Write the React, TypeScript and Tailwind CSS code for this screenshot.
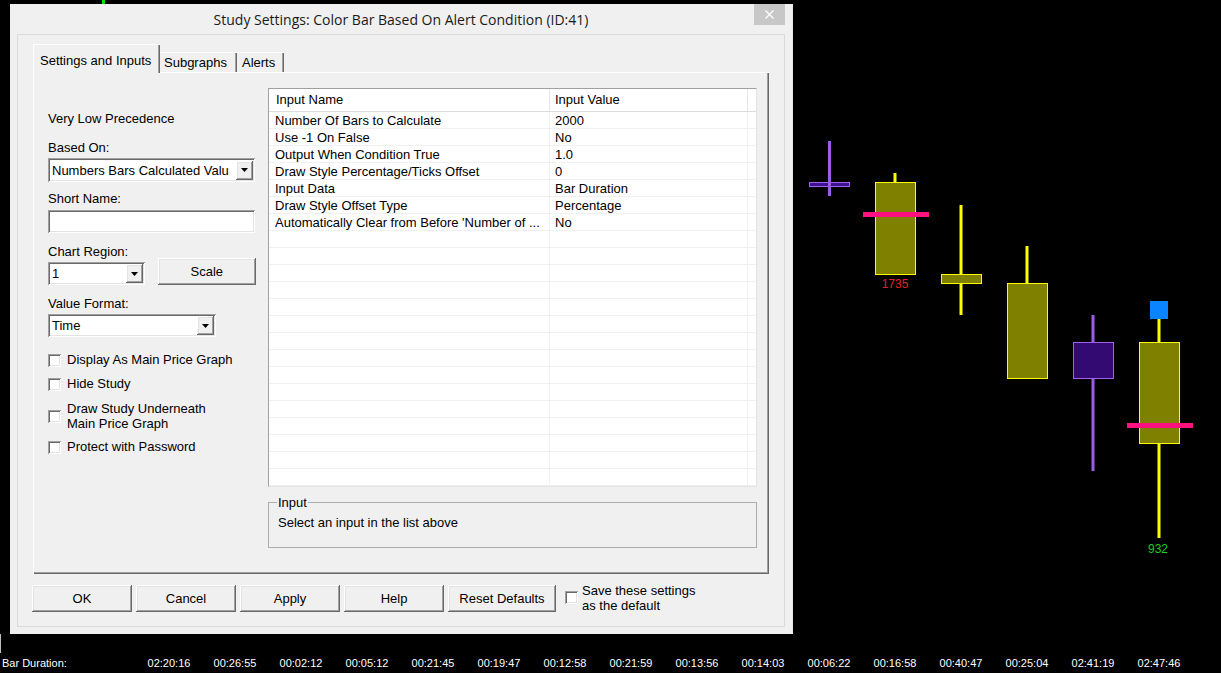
import React from "react";

const RAISED =
  "shadow-[inset_-1px_-1px_0_#696969,inset_1px_1px_0_#ffffff,inset_-2px_-2px_0_#a0a0a0,inset_2px_2px_0_#e3e3e3]";
const SUNKEN =
  "shadow-[inset_1px_1px_0_#a0a0a0,inset_-1px_-1px_0_#ffffff,inset_2px_2px_0_#696969,inset_-2px_-2px_0_#e3e3e3]";

function Arrow() {
  return (
    <svg width="7" height="4" viewBox="0 0 7 4">
      <polygon points="0,0 7,0 3.5,4" fill="#000" />
    </svg>
  );
}

function Combo({ className, text, textClass }: { className: string; text: string; textClass: string }) {
  return (
    <div className={`flex items-center bg-white pl-[4px] pr-[2px] ${SUNKEN} ${className}`}>
      <div className={`whitespace-nowrap pt-px ${textClass}`}>{text}</div>
      <div className={`ml-auto flex h-[19px] w-[17px] items-center justify-center bg-[#f0f0f0] ${RAISED}`}>
        <Arrow />
      </div>
    </div>
  );
}

function Check() {
  return <div className={`h-[13px] w-[13px] shrink-0 bg-white ${SUNKEN}`} />;
}

const rows: [string, string][] = [
  ["Number Of Bars to Calculate", "2000"],
  ["Use -1 On False", "No"],
  ["Output When Condition True", "1.0"],
  ["Draw Style Percentage/Ticks Offset", "0"],
  ["Input Data", "Bar Duration"],
  ["Draw Style Offset Type", "Percentage"],
  ["Automatically Clear from Before 'Number of ...", "No"],
];
const allRows: [string, string][] = [...rows, ...Array.from({ length: 16 }, () => ["", ""] as [string, string])];

const times = [
  "02:20:16", "00:26:55", "00:02:12", "00:05:12", "00:21:45", "00:19:47", "00:12:58", "00:21:59",
  "00:13:56", "00:14:03", "00:06:22", "00:16:58", "00:40:47", "00:25:04", "02:41:19", "02:47:46",
];

function Chart() {
  const olive = { fill: "#808000", stroke: "#ffff00", strokeWidth: 1 };
  const purple = { fill: "#330a72", stroke: "#a060f0", strokeWidth: 1 };
  return (
    <svg className="absolute inset-0" width="1221" height="653" viewBox="0 0 1221 653">
      <rect x="102" y="0" width="3" height="5" fill="#00e000" />
      <rect x="0" y="634" width="1" height="19" fill="#bdbdbd" />
      {/* candle 1 */}
      <rect x="809.5" y="182.5" width="40" height="4" {...purple} fill="#3c1290" />
      <rect x="828" y="141" width="3" height="55" fill="#9d5ce6" />
      {/* candle 2 */}
      <rect x="893.5" y="173" width="3" height="10" fill="#ffff00" />
      <rect x="875.5" y="182.5" width="40" height="92" {...olive} />
      <rect x="863" y="212" width="66" height="5" fill="#ff1080" />
      <text x="895" y="288" textAnchor="middle" fontSize="12" fill="#e52222" fontFamily="Liberation Sans, Arial, sans-serif">1735</text>
      {/* candle 3 */}
      <rect x="959.5" y="205" width="3" height="110" fill="#ffff00" />
      <rect x="941.5" y="274.5" width="40" height="9" {...olive} />
      {/* candle 4 */}
      <rect x="1025.5" y="246" width="3" height="38" fill="#ffff00" />
      <rect x="1007.5" y="283.5" width="40" height="95" {...olive} />
      {/* candle 5 */}
      <rect x="1091.5" y="315" width="3" height="156" fill="#9d5ce6" />
      <rect x="1073.5" y="342.5" width="40" height="36" {...purple} />
      {/* candle 6 */}
      <rect x="1150" y="301" width="18" height="18" fill="#0a84ff" />
      <rect x="1157.5" y="319" width="3" height="219" fill="#ffff00" />
      <rect x="1139.5" y="342.5" width="40" height="101" {...olive} />
      <rect x="1127" y="423" width="66" height="5" fill="#ff1080" />
      <text x="1158" y="553" textAnchor="middle" fontSize="12" fill="#22cc22" fontFamily="Liberation Sans, Arial, sans-serif">932</text>
    </svg>
  );
}

function Dialog() {
  return (
    <div className="absolute left-[10px] top-[4px] flex h-[630px] w-[782px] flex-col bg-[#f0f0f0] text-[13px] leading-[16px] text-black shadow-[1px_0_0_#e8e8e8]">
      {/* title bar */}
      <div className="relative flex h-[30px] shrink-0 items-center justify-center pt-[2px]">
        <span className="font-['Open_Sans',sans-serif] text-[14px] text-[#1a1a1a]">
          Study Settings: Color Bar Based On Alert Condition (ID:41)
        </span>
        <div className="absolute right-[7px] top-0 flex h-[21px] w-[31px] items-center justify-center bg-[#c7c7c7]">
          <svg width="9" height="9" viewBox="0 0 9 9">
            <path d="M0.5 0.5 L8.5 8.5 M8.5 0.5 L0.5 8.5" stroke="#ffffff" strokeWidth="1.2" />
          </svg>
        </div>
      </div>

      {/* client frame */}
      <div className="mx-[7px] mb-[7px] flex flex-1 flex-col border border-[#dadada] px-[15px] pt-[9px]">
        {/* tabs */}
        <div className="relative z-10 -mb-px flex h-[29px] items-end">
          <div className="h-[29px] w-[127px] bg-[#f0f0f0] pl-[7px] pt-[9px] shadow-[inset_1px_1px_0_#ffffff,inset_-1px_0_0_#696969,inset_-2px_0_0_#a0a0a0]">
            Settings and Inputs
          </div>
          <div className="mb-px h-[20px] w-[77px] pl-[4px] pt-[3px] shadow-[inset_0_1px_0_#ffffff,inset_-1px_0_0_#696969,inset_-2px_0_0_#a0a0a0]">
            Subgraphs
          </div>
          <div className="mb-px h-[20px] w-[47px] pl-[5px] pt-[3px] shadow-[inset_0_1px_0_#ffffff,inset_-1px_0_0_#696969,inset_-2px_0_0_#a0a0a0]">
            Alerts
          </div>
        </div>

        {/* tab panel */}
        <div className="flex h-[502px] shrink-0 items-start pl-[15px] pt-[16px] shadow-[inset_1px_1px_0_#ffffff,inset_-1px_-1px_0_#696969,inset_-2px_-2px_0_#a0a0a0]">
          {/* left column */}
          <div className="flex w-[208px] flex-col pt-[22px]">
            <div className="h-[16px] pt-px">Very Low Precedence</div>
            <div className="mt-[13px] h-[16px] pt-px">Based On:</div>
            <Combo className="mt-[3px] h-[24px] w-[207px]" textClass="" text="Numbers Bars Calculated Valu" />
            <div className="mt-[8px] h-[16px] pt-px">Short Name:</div>
            <div className={`mt-[4px] h-[23px] w-[207px] bg-white ${SUNKEN}`} />
            <div className="mt-[9px] h-[16px] pt-[2px]">Chart Region:</div>
            <div className="flex h-[27px] items-end">
              <Combo className="h-[23px] w-[97px]" textClass="" text="1" />
              <div className={`ml-[13px] flex h-[27px] w-[99px] items-center justify-center bg-[#f0f0f0] ${RAISED}`}>
                Scale
              </div>
            </div>
            <div className="mt-[10px] h-[16px] pt-px">Value Format:</div>
            <Combo className="mt-[3px] h-[23px] w-[168px]" textClass="" text="Time" />
            <div className="mt-[15px] flex h-[16px] items-center">
              <Check />
              <span className="ml-[6px] whitespace-nowrap">Display As Main Price Graph</span>
            </div>
            <div className="mt-[8px] flex h-[16px] items-center">
              <Check />
              <span className="ml-[6px]">Hide Study</span>
            </div>
            <div className="mt-[9px] flex items-center">
              <Check />
              <span className="ml-[6px] leading-[15px]">
                Draw Study Underneath
                <br />
                Main Price Graph
              </span>
            </div>
            <div className="mt-[8px] flex h-[16px] items-center">
              <Check />
              <span className="ml-[6px]">Protect with Password</span>
            </div>
          </div>

          {/* right column */}
          <div className="ml-[12px] flex w-[489px] flex-col">
            <div className="flex h-[399px] flex-col overflow-hidden border border-b-[#e3e3e3] border-l-[#a0a0a0] border-r-[#e3e3e3] border-t-[#a0a0a0] bg-white">
              <div className="flex h-[23px] shrink-0 items-center border-b border-[#dcdcdc]">
                <div className="flex h-full w-[281px] items-center border-r border-[#e5e5e5] pl-[7px]">Input Name</div>
                <div className="flex h-full w-[198px] items-center border-r border-[#e5e5e5] pl-[5px]">Input Value</div>
                <div className="h-full flex-1" />
              </div>
              {allRows.map((r, i) => (
                <div key={i} className="flex h-[17px] shrink-0 border-b border-[#f0f0f0]">
                  <div className="w-[281px] whitespace-nowrap border-r border-[#f0f0f0] pl-[6px] pt-px">{r[0]}</div>
                  <div className="w-[198px] whitespace-nowrap border-r border-[#f0f0f0] pl-[5px] pt-px">{r[1]}</div>
                  <div className="flex-1" />
                </div>
              ))}
            </div>
            <div className="relative mt-[15px] h-[46px] border border-[#adadad]">
              <span className="absolute -top-[8px] left-[8px] bg-[#f0f0f0] px-px">Input</span>
              <div className="pl-[9px] pt-[12px]">Select an input in the list above</div>
            </div>
          </div>
        </div>

        {/* bottom buttons */}
        <div className="-ml-px mt-[11px] flex h-[27px] items-start gap-[4px]">
          <div className={`flex h-[27px] w-[100px] items-center justify-center ${RAISED}`}>OK</div>
          <div className={`flex h-[27px] w-[100px] items-center justify-center ${RAISED}`}>Cancel</div>
          <div className={`flex h-[27px] w-[100px] items-center justify-center ${RAISED}`}>Apply</div>
          <div className={`flex h-[27px] w-[100px] items-center justify-center ${RAISED}`}>Help</div>
          <div className={`flex h-[27px] w-[108px] items-center justify-center ${RAISED}`}>Reset Defaults</div>
          <div className="ml-[5px] flex items-start">
            <div className="mt-[6px]">
              <Check />
            </div>
            <div className="-mt-[2px] ml-[4px] leading-[15px]">
              Save these settings
              <br />
              as the default
            </div>
          </div>
        </div>
      </div>
    </div>
  );
}

export default function App() {
  return (
    <div className="relative flex h-[673px] w-[1221px] flex-col overflow-hidden bg-black font-['Liberation_Sans',Arial,sans-serif]">
      <div className="relative flex-1">
        <Chart />
      </div>
      <div className="flex h-[20px] shrink-0 items-center text-[11px] text-white">
        <div className="w-[136px] pl-[2px]">Bar Duration:</div>
        {times.map((t) => (
          <div key={t} className="w-[66px] text-center">
            {t}
          </div>
        ))}
      </div>
      <Dialog />
    </div>
  );
}
